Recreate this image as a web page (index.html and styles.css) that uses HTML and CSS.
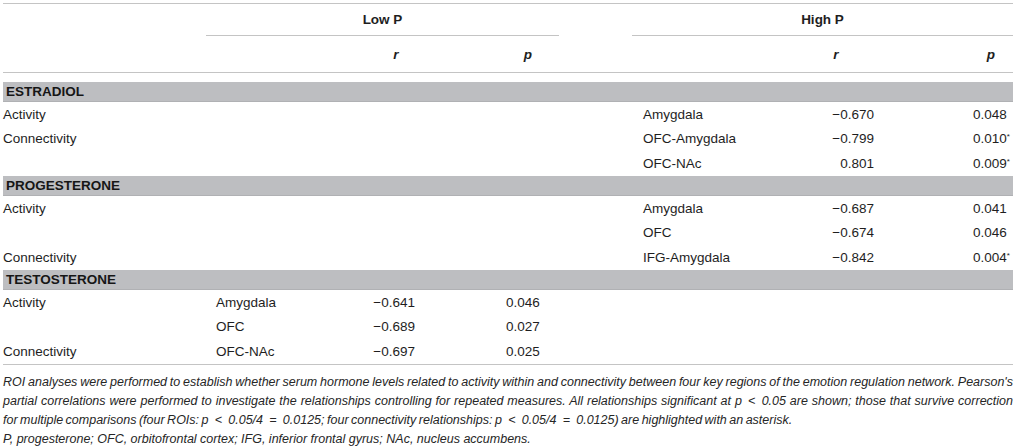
FILE: index.html
```html
<!DOCTYPE html>
<html lang="en">
<head>
<meta charset="utf-8">
<title>ROI analyses</title>
<link rel="stylesheet" href="styles.css">
</head>
<body>
<table class="tbl">
  <colgroup>
    <col class="c-label">
    <col class="c-lreg">
    <col class="c-lr">
    <col class="c-lp">
    <col class="c-gap">
    <col class="c-hreg">
    <col class="c-hr">
    <col class="c-hp">
  </colgroup>
  <thead>
    <tr class="h1">
      <th></th>
      <th class="grp" colspan="3">Low P</th>
      <th></th>
      <th class="grp" colspan="3">High P</th>
    </tr>
    <tr class="h2">
      <th></th>
      <th></th>
      <th class="hr-low"><i>r</i></th>
      <th class="hp-low"><i>p</i></th>
      <th></th>
      <th></th>
      <th class="hr-high"><i>r</i></th>
      <th class="hp-high"><i>p</i></th>
    </tr>
  </thead>
  <tbody>
    <tr class="gap-row"><td colspan="8"></td></tr>
    <tr class="band"><td colspan="8">ESTRADIOL</td></tr>
    <tr><td class="lbl">Activity</td><td></td><td></td><td></td><td></td><td class="reg-h">Amygdala</td><td class="r-h">−0.670</td><td class="p-h">0.048</td></tr>
    <tr><td class="lbl">Connectivity</td><td></td><td></td><td></td><td></td><td class="reg-h">OFC-Amygdala</td><td class="r-h">−0.799</td><td class="p-h">0.010<sup>*</sup></td></tr>
    <tr><td class="lbl"></td><td></td><td></td><td></td><td></td><td class="reg-h">OFC-NAc</td><td class="r-h">0.801</td><td class="p-h">0.009<sup>*</sup></td></tr>
    <tr class="band"><td colspan="8">PROGESTERONE</td></tr>
    <tr><td class="lbl">Activity</td><td></td><td></td><td></td><td></td><td class="reg-h">Amygdala</td><td class="r-h">−0.687</td><td class="p-h">0.041</td></tr>
    <tr><td class="lbl"></td><td></td><td></td><td></td><td></td><td class="reg-h">OFC</td><td class="r-h">−0.674</td><td class="p-h">0.046</td></tr>
    <tr><td class="lbl">Connectivity</td><td></td><td></td><td></td><td></td><td class="reg-h">IFG-Amygdala</td><td class="r-h">−0.842</td><td class="p-h">0.004<sup>*</sup></td></tr>
    <tr class="band"><td colspan="8">TESTOSTERONE</td></tr>
    <tr><td class="lbl">Activity</td><td class="reg-l">Amygdala</td><td class="r-l">−0.641</td><td class="p-l">0.046</td><td></td><td></td><td></td><td></td></tr>
    <tr><td class="lbl"></td><td class="reg-l">OFC</td><td class="r-l">−0.689</td><td class="p-l">0.027</td><td></td><td></td><td></td><td></td></tr>
    <tr class="last"><td class="lbl">Connectivity</td><td class="reg-l">OFC-NAc</td><td class="r-l">−0.697</td><td class="p-l">0.025</td><td></td><td></td><td></td><td></td></tr>
  </tbody>
</table>
<div class="notes">
  <p class="note main">ROI analyses were performed to establish whether serum hormone levels related to activity within and connectivity between four key regions of the emotion regulation network. Pearson's partial correlations were performed to investigate the relationships controlling for repeated measures. All relationships significant at p&ensp;&lt;&ensp;0.05 are shown; those that survive correction for&nbsp;multiple comparisons (four ROIs: p&ensp;&lt;&ensp;0.05/4&ensp;=&ensp;0.0125; four connectivity relationships: p&ensp;&lt;&ensp;0.05/4&ensp;=&ensp;0.0125) are highlighted with an asterisk.</p>
  <p class="note">P, progesterone; OFC, orbitofrontal cortex; IFG, inferior frontal gyrus; NAc, nucleus accumbens.</p>
</div>
</body>
</html>
```

FILE: styles.css
```css
html, body {
  margin: 0;
  padding: 0;
  background: #ffffff;
}

body {
  font-family: "Liberation Sans", Arial, Helvetica, sans-serif;
  color: #1e1e1e;
  font-size: 13.5px;
}

.tbl {
  margin: 3px 0 0 3px;
  width: 1010px;
  border-collapse: collapse;
  table-layout: fixed;
  border-top: 1px solid #c4c4c4;
}

.c-label { width: 203px; }
.c-lreg { width: 146px; }
.c-lr { width: 88px; }
.c-lp { width: 119px; }
.c-gap { width: 73px; }
.c-hreg { width: 148px; }
.c-hr { width: 120px; }
.c-hp { width: 113px; }

th, td {
  padding: 0;
  white-space: nowrap;
  vertical-align: middle;
}

th {
  font-weight: bold;
}

.h1 th {
  height: 31px;
}

.h1 .grp {
  text-align: center;
  border-bottom: 1px solid #c4c4c4;
}

.h2 th {
  height: 36px;
  border-bottom: 1px solid #c4c4c4;
}

.hr-low { text-align: center; }
.hp-low { text-align: right; padding-right: 27px; }
.hr-high { text-align: center; padding-right: 8px; }
.hp-high { text-align: right; padding-right: 18px; }

.band td {
  background: #bdbec1;
  border-bottom: 1px solid #b0b1b4;
  font-weight: bold;
  padding-left: 3px;
  color: #161616;
}

tbody tr td {
  height: 24.67px;
}

tbody .gap-row td { height: 9px; }
tbody .band td { height: 19px; }

.lbl { padding-left: 0; }
.reg-l { padding-left: 10px; }
.r-l { text-align: right; padding-right: 25px; }
.p-l { padding-left: 66px; }
.reg-h { padding-left: 11px; }
.r-h { text-align: right; padding-right: 26px; }
.p-h { padding-left: 73px; }

sup {
  font-size: 8px;
  vertical-align: 4px;
  line-height: 0;
}

.last td {
  border-bottom: 1px solid #c4c4c4;
}

.notes {
  margin: 8px 0 0 3px;
  width: 1010px;
}

.note {
  margin: 0;
  font-style: italic;
  font-size: 12.5px;
  line-height: 19px;
  text-align: justify;
  color: #262626;
}

.note.main {
  word-spacing: -1px;
}
```
